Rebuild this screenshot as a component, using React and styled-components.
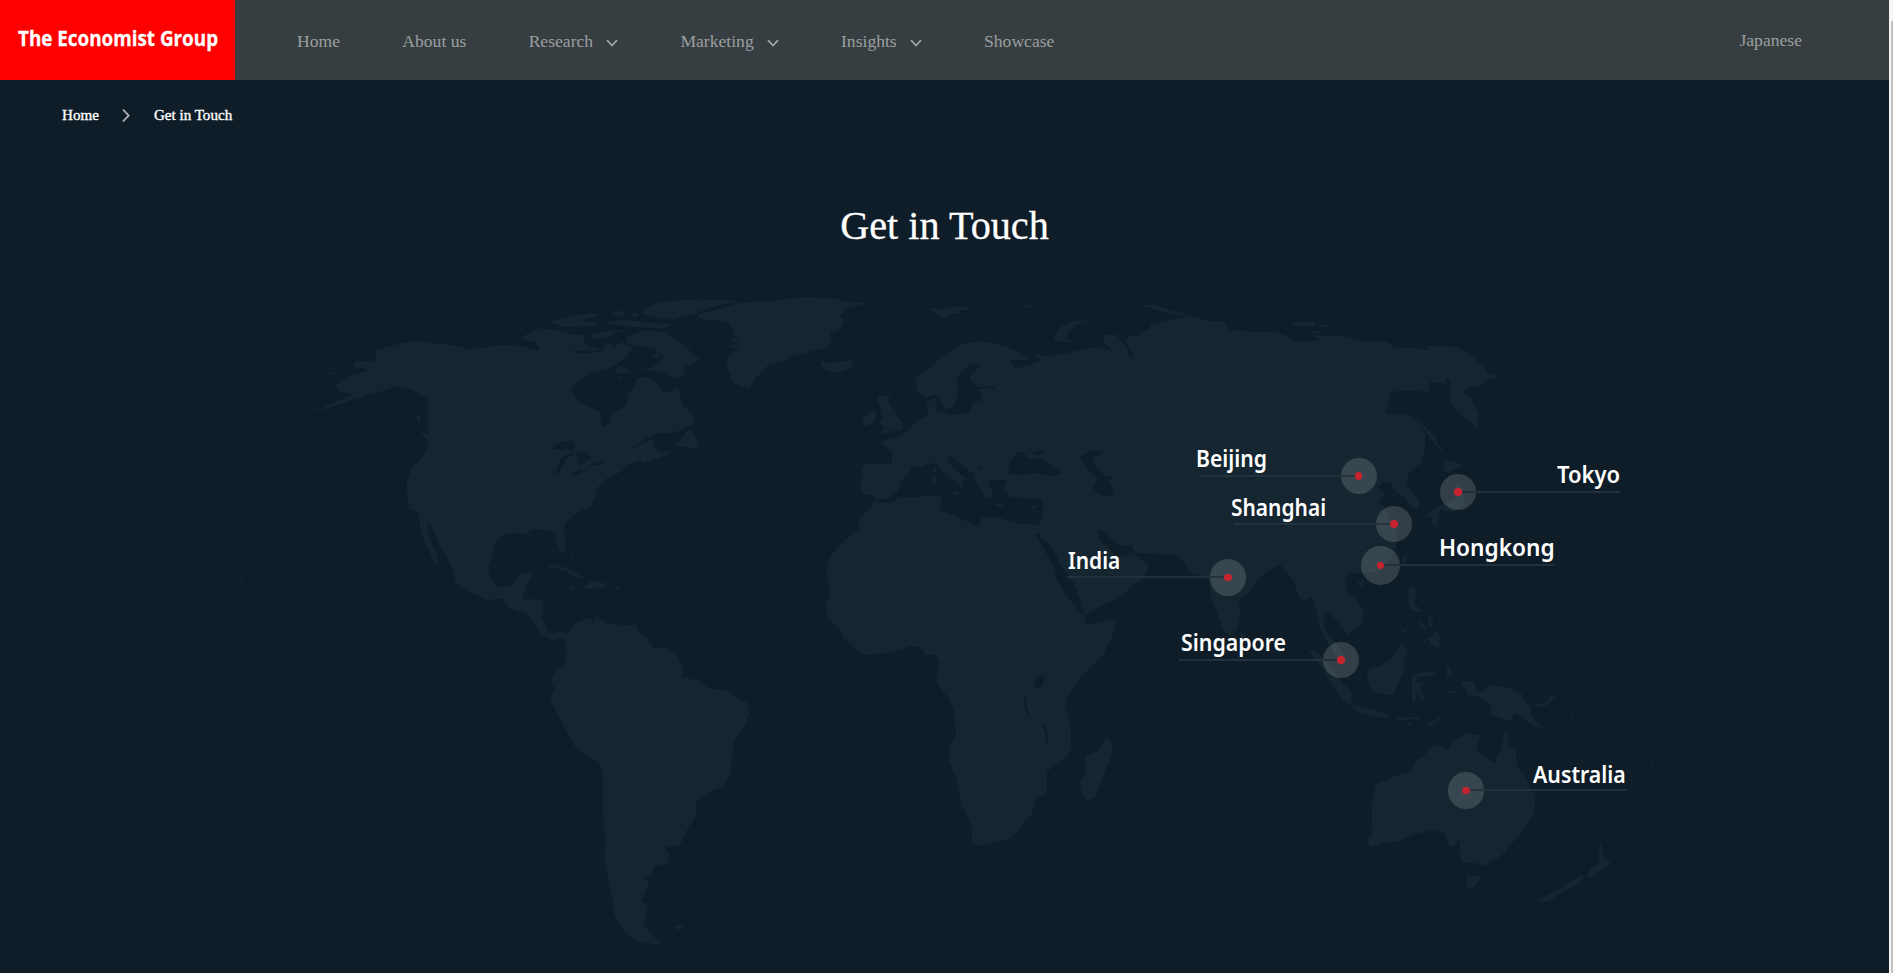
import React from "react";
import styled, { createGlobalStyle } from "styled-components";

const LAND = "#152631";
const OCEAN = "#0f1d29";

const GlobalStyle = createGlobalStyle`
  body {
    margin: 0;
    background: ${OCEAN};
    font-family: "Liberation Serif", "Times New Roman", serif;
    overflow: hidden;
  }
`;

const Window = styled.div`
  display: flex;
  width: 1893px;
  height: 973px;
  overflow: hidden;
`;

const Page = styled.div`
  flex: 1;
  min-width: 0;
  display: flex;
  flex-direction: column;
  background: ${OCEAN};
`;

const ScrollTrack = styled.div`
  width: 4px;
  box-sizing: border-box;
  padding: 21px 0 0 2px;
  background: #f6f6f6;
`;

const ScrollThumb = styled.div`
  height: 100%;
  background: #c1c1c1;
`;

const Header = styled.header`
  display: flex;
  flex: none;
  height: 80px;
  background: #373e41;
`;

const Logo = styled.a`
  flex: none;
  width: 235px;
  height: 80px;
  box-sizing: border-box;
  padding: 23px 0 0 17.5px;
  background: #fe0000;
  color: #fff;
  font: 700 21px/30px "Open Sans", sans-serif;
`;

const LogoText = styled.span`
  display: inline-block;
  white-space: nowrap;
  transform-origin: 0 50%;
  transform: scaleX(0.897);
  -webkit-text-stroke: 0.3px #fff;
`;

const Nav = styled.nav`
  flex: 1;
  display: flex;
  gap: 62.3px;
  padding: 31px 0 0 62px;
`;

const NavLink = styled.a`
  display: flex;
  gap: 13px;
  height: 20px;
  font-size: 17.6px;
  line-height: 20px;
  white-space: nowrap;
  color: #9b9fa0;
`;

const NavChevron = styled.svg`
  width: 12px;
  height: 8px;
  margin-top: 8px;
  fill: none;
  stroke: #a0a4a5;
  stroke-width: 1.7;
`;

const Language = styled.a`
  padding: 30px 87px 0 0;
  font-size: 17.6px;
  line-height: 20px;
  color: #9b9fa0;
`;

const Breadcrumb = styled.div`
  display: flex;
  flex: none;
  height: 18px;
  padding: 26px 0 0 62px;
  font-size: 15.1px;
  line-height: 18px;
  color: #fff;
  -webkit-text-stroke: 0.35px #fff;
`;

const CrumbArrow = styled.svg`
  width: 8px;
  height: 13px;
  margin: 3px 23.5px 0 23.5px;
  fill: none;
  stroke: #a7adb2;
  stroke-width: 1.8;
`;

const Title = styled.h1`
  margin: 79px 0 0;
  height: 46px;
  font-size: 40.2px;
  line-height: 46px;
  font-weight: 400;
  text-align: center;
  color: #fff;
  -webkit-text-stroke: 0.3px #fff;
`;

const MapCanvas = styled.div`
  position: relative;
  flex: none;
  width: 1889px;
  height: 693px;
  margin-top: 31px;
`;

const MapArt = styled.svg`
  display: block;
  width: 1889px;
  height: 693px;
  fill: ${LAND};
`;

const Pin = styled.div`
  position: absolute;
  left: ${(p) => p.$x - p.$r}px;
  top: ${(p) => p.$y - 280 - p.$r}px;
  width: ${(p) => p.$r * 2}px;
  height: ${(p) => p.$r * 2}px;
  border-radius: 50%;
  background: rgba(255, 255, 255, 0.15);
  display: grid;
  place-items: center;
`;

const PinDot = styled.i`
  position: relative;
  width: 7.6px;
  height: 7.6px;
  border-radius: 50%;
  background: #c7232f;
`;

const Leader = styled.div`
  position: absolute;
  left: ${(p) => p.$from}px;
  top: ${(p) => Math.floor(p.$y) - 281}px;
  width: ${(p) => p.$to - p.$from}px;
  height: 2px;
  background: ${(p) => (p.$inner ? "rgba(8, 16, 24, 0.35)" : "#21323e")};
`;

const City = styled.span`
  position: absolute;
  left: ${(p) => p.$x}px;
  top: ${(p) => p.$base - 280 - 24}px;
  font: 600 ${(p) => p.$size}px/32px "Noto Sans", sans-serif;
  color: #fff;
  white-space: nowrap;
  transform-origin: 0 0;
  transform: scaleX(${(p) => p.$stretch});
`;

const cities = [
  { name: "Beijing", x: 1196, base: 467, stretch: 0.94, cx: 1358.7, cy: 476, end: 1199 },
  { name: "Shanghai", x: 1230.5, base: 516, stretch: 0.93, cx: 1394, cy: 524, end: 1234 },
  { name: "India", x: 1067.5, base: 569, stretch: 0.93, cx: 1228, cy: 577.5, end: 1067 },
  { name: "Singapore", x: 1180.5, base: 651, stretch: 0.948, cx: 1341.3, cy: 660, end: 1179 },
  { name: "Tokyo", x: 1557, base: 483, stretch: 0.978, cx: 1458.3, cy: 492, end: 1620 },
  { name: "Hongkong", x: 1438.5, base: 555, stretch: 0.943, size: 24, r: 19.5, cx: 1380.5, cy: 565.4, end: 1554 },
  { name: "Australia", x: 1533, base: 783, stretch: 0.946, cx: 1466.3, cy: 790.5, end: 1627 },
];

const Down = () => (
  <NavChevron viewBox="0 0 12 8">
    <path d="M1 1.2 6 6.6 11 1.2" />
  </NavChevron>
);

const WorldMap = () => (
  <MapArt viewBox="0 280 1889 693">
    {/* North and Central America */}
    <g transform="translate(290 280) scale(.33333)">
      <path d="M258 212 330 190 400 182 430 190 490 196 540 208 600 200 650 194 700 200 750 212 800 220 840 216 880 222 930 215 945 195 960 190 985 215 1000 235 980 255 950 268 900 282 870 300 845 325 850 345 865 365 905 385 935 398 930 420 940 442 955 435 965 400 990 390 1010 375 1015 345 1030 320 1040 295 1070 290 1100 305 1115 330 1130 340 1150 330 1165 320 1170 350 1180 380 1210 400 1214 425 1200 440 1150 458 1100 460 1060 480 1020 508 1060 490 1095 475 1090 500 1110 518 1140 512 1130 525 1060 550 1055 540 1010 555 995 575 950 595 925 620 910 665 900 680 860 700 825 730 820 750 828 790 820 822 805 810 795 760 770 750 725 748 710 762 680 758 645 762 615 785 605 830 595 860 600 895 620 920 650 920 675 912 685 885 700 878 730 878 715 905 705 935 695 958 750 958 762 968 755 1010 770 1045 785 1062 810 1050 835 1068 825 1080 810 1070 790 1082 750 1060 720 1010 700 998 660 985 635 955 595 960 545 940 495 905 490 870 470 830 450 800 430 750 420 728 410 735 420 780 440 820 445 855 430 840 405 790 390 740 388 700 358 685 352 640 350 600 365 565 400 530 412 500 415 470 415 355 390 345 370 330 320 318 270 335 230 345 195 365 205 352 150 372 90 390 45 400 100 382 150 360 190 345 150 335 135 315 170 290 220 275 235 268 195 262 195 245 250 242 260 235Z" />
      <path d="M690 175 740 145 800 150 850 165 880 165 885 190 900 200 930 205 920 214 870 210 820 220 760 222 740 215 750 205 735 185ZM780 125 830 112 910 100 925 106 870 122 925 128 905 138 850 140 810 138ZM900 165 960 152 1000 150 940 175 910 178ZM940 130 990 120 1060 126 1140 132 1120 145 1020 140ZM960 95 1000 93 1005 105 985 108ZM1010 108 1040 98 1045 110ZM1010 170 1060 152 1130 155 1150 175 1195 200 1200 220 1232 240 1185 260 1180 285 1150 295 1110 275 1050 268 1090 262 1110 240 1125 228 1090 205 1050 200 1010 190ZM1055 90 1110 65 1220 58 1350 62 1290 75 1215 100 1150 120 1090 112 1060 102ZM970 278 990 255 1025 275 1000 282ZM945 215 1000 185 1030 205 1000 240ZM980 292 1000 290 990 300ZM1085 228 1105 218 1112 226 1098 234ZM378 408 395 405 385 430ZM392 455 425 462 438 490 425 498ZM1155 495 1190 455 1205 450 1225 490 1222 508 1180 500ZM757 870 790 852 830 865 885 895 860 893 830 875 790 862ZM880 925 905 900 950 912 945 922 910 928ZM835 920 858 922 845 929ZM970 920 995 923 980 929ZM842 820 852 835 846 838ZM115 278 140 276 130 285ZM100 322 120 320 115 328Z" />
      <path fill={OCEAN} d="M780 508 815 485 845 480 858 495 850 512 830 508 805 510ZM795 580 810 540 830 522 855 520 830 535 815 560 810 578ZM860 520 890 515 903 535 885 545 870 558 862 545ZM845 580 870 570 900 566 890 574 860 584ZM895 555 930 545 942 550 910 558Z" />
    </g>
    <path d="M238 579 243 580 243 583 239 581Z" />
    {/* South America */}
    <g transform="translate(520 600) scale(.33333)">
      <path d="M135 108 165 70 215 52 216 90 222 60 235 52 265 72 320 75 350 73 355 95 380 115 400 143 440 143 470 160 490 210 485 232 540 242 565 265 625 272 650 295 682 308 688 340 675 375 640 425 638 470 630 520 610 560 575 572 540 595 528 610 526 650 495 700 480 735 445 740 425 732 448 765 440 792 400 798 395 830 368 832 388 850 375 880 362 900 385 920 378 945 370 970 385 995 405 1015 432 1028 400 1034 350 1022 310 990 283 945 275 880 262 820 253 780 255 700 248 640 250 540 240 490 205 468 165 440 130 375 105 325 92 305 92 285 105 265 92 250 100 225 135 185 140 150 135 120ZM460 982 480 974 495 984 475 989Z" />
    </g>
    {/* Greenland, Iceland, Svalbard, British Isles */}
    <g transform="translate(680 280) scale(.33333)">
      <path d="M50 105 120 85 180 68 280 62 370 52 480 56 480 63 560 70 500 86 480 110 495 122 480 150 450 160 455 190 430 205 340 228 320 240 265 255 230 290 208 325 185 320 160 308 140 260 145 225 178 207 148 200 178 190 150 180 175 172 152 165 162 158 150 130 120 122 70 120ZM420 242 445 250 515 240 515 262 480 278 440 272 425 260ZM590 360 600 345 630 350 625 370 645 390 655 415 672 430 665 450 630 455 595 462 615 440 600 430 610 410 600 400 605 385ZM550 410 580 388 590 405 580 430 548 440ZM745 85 790 88 820 80 870 82 870 88 830 92 855 100 820 100 795 118 770 105Z" />
    </g>
    {/* Europe, western Asia and Arabia */}
    <g transform="translate(810 280) scale(.33333)">
      <path d="M318 290 350 270 400 225 450 195 510 183 550 190 600 205 655 228 660 240 595 240 615 264 655 258 690 242 675 222 710 228 760 222 830 205 870 205 912 216 880 185 882 165 920 165 950 205 962 240 972 225 945 180 960 168 985 168 985 158 1020 148 1020 140 1070 125 1130 110 1180 122 1240 125 1260 150 1260 900 1200 900 1165 885 1140 880 1105 825 1040 822 975 818 965 798 930 795 900 775 885 752 862 750 870 780 895 805 920 830 945 830 970 812 985 835 1018 855 1000 895 960 925 925 955 880 975 822 1006 810 960 790 905 760 870 740 830 710 785 690 770 688 755 690 735 695 715 700 680 695 655 670 658 640 655 600 650 580 625 590 600 575 598 540 600 535 610 550 640 545 655 525 650 510 620 495 600 492 582 460 560 425 528 410 530 415 545 440 575 475 600 460 600 457 628 445 612 410 590 380 555 360 548 340 560 305 560 300 575 270 605 262 635 235 655 200 658 190 648 155 640 150 610 160 585 152 565 165 552 245 553 248 520 215 490 225 480 265 468 300 445 320 420 355 408 350 370 375 350 380 375 375 395 410 400 430 405 480 398 490 365 510 362 520 350 500 328 555 325 550 318 500 320 480 300 480 285 510 255 485 250 450 280 440 300 445 330 440 360 425 385 405 390 395 370 375 345 345 350 320 335ZM412 635 450 632 445 648ZM363 590 380 590 378 615 365 615ZM367 565 378 562 378 582ZM550 672 585 672 570 680ZM655 680 685 674 672 686ZM730 180 745 145 780 125 850 118 800 135 775 155 770 175 785 188ZM630 78 665 76 650 84ZM990 75 1040 75 1080 92 1130 100 1120 106 1060 95Z" />
      <path fill={OCEAN} d="M595 580 600 545 620 515 645 520 650 535 690 535 740 565 755 580 720 590 680 578 640 585 605 585ZM665 520 705 508 690 527ZM810 530 850 510 875 515 870 528 845 530 860 560 890 590 905 585 905 595 895 600 912 640 895 652 860 640 850 620 865 600 830 565ZM502 565 514 562 514 572Z" />
    </g>
    {/* Africa and Madagascar */}
    <g transform="translate(810 560) scale(.33333)">
      <path d="M190 -175 240 -170 270 -188 330 -190 395 -195 390 -150 430 -135 505 -100 515 -130 560 -130 620 -110 690 -105 690 -80 675 -75 700 -35 730 15 740 60 775 115 820 165 830 195 920 175 915 210 880 285 810 355 775 405 765 440 782 500 782 570 770 590 710 635 710 700 675 720 665 765 600 835 560 845 500 858 487 845 485 800 455 735 440 660 415 600 420 560 438 525 430 445 412 410 380 370 388 300 375 285 345 285 330 262 305 258 240 278 160 285 100 235 90 210 55 175 45 130 58 110 60 80 50 40 52 10 75 -30 110 -65 145 -90 150 -130 185 -155ZM892 530 905 550 905 580 880 650 858 712 830 722 815 700 810 665 828 640 825 590 860 575Z" />
      <path fill={OCEAN} d="M675 355 700 343 705 360 690 385 675 385Z" />
      <path fill="none" stroke={OCEAN} strokeWidth="7" d="M643 410 648 445 660 475M697 487 709 515 710 555" />
    </g>
    {/* Siberia and the Russian Far East */}
    <g transform="translate(1140 280) scale(.33333)">
      <path d="M0 155 30 148 30 135 70 125 150 108 190 120 255 125 250 148 330 155 400 155 435 165 470 185 540 180 520 165 620 170 660 182 740 185 760 202 870 208 850 198 950 200 1000 230 1035 265 1035 278 1078 290 1040 300 1020 320 985 320 965 335 990 350 1015 400 1015 448 970 410 930 370 932 310 920 290 915 310 870 305 865 338 830 330 755 335 735 395 760 405 780 400 820 410 855 460 855 500 845 550 820 565 805 580 800 612 840 665 835 687 812 680 795 650 765 635 755 612 730 606 710 625 735 640 715 655 690 720 0 720ZM820 410 835 418 870 455 897 475 885 478 912 515 900 510 860 460ZM910 543 940 545 968 552 960 565 935 570 925 580 912 570ZM450 128 520 126 525 138 470 138ZM535 135 580 137 545 142ZM515 153 560 157 530 162ZM905 182 920 180 918 186Z" />
    </g>
    {/* India, China and South-East Asia */}
    <g transform="translate(1050 430) scale(.33333)">
      <path d="M300 250 320 372 385 375 420 425 445 435 475 445 485 510 500 545 520 600 540 618 560 600 570 560 568 510 600 485 625 450 650 425 690 405 715 430 735 460 745 500 765 510 785 500 800 545 812 600 840 650 870 700 885 700 880 670 855 635 830 610 820 580 825 545 850 560 875 590 895 615 940 575 942 545 920 510 890 480 885 445 905 430 935 430 985 425 1020 390 1040 350 1040 300 1020 270 1010 240 985 215 1005 195 975 180 965 160 950 100 700 0 300 0ZM572 605 585 615 580 630 572 628ZM922 455 945 450 940 468 928 468ZM1060 380 1072 373 1068 405 1058 400ZM775 660 800 665 850 720 880 760 905 790 905 825 880 815 840 760 820 720ZM905 825 935 830 1000 850 1025 862 980 862 920 845ZM950 740 960 715 990 710 1030 680 1055 640 1075 660 1060 690 1065 720 1040 770 1030 795 985 790 960 775ZM1085 735 1110 728 1155 725 1150 735 1105 740 1095 760 1130 752 1110 772 1127 810 1112 805 1102 785 1095 820 1085 815 1085 780Z" />
    </g>
    {/* Japan, the Philippines and New Guinea */}
    <g transform="translate(1340 430) scale(.33333)">
      <path d="M345 150 370 180 375 225 340 245 300 240 290 258 300 262 285 290 275 280 275 262 258 258 275 240 310 220 345 210 350 180ZM205 472 225 475 228 500 220 520 255 545 235 545 215 540 205 520ZM265 550 280 570 275 600 265 580ZM235 570 260 590 255 600 240 585ZM245 630 270 625 290 600 300 625 297 655 275 645 265 630 250 638ZM185 605 210 583 205 592 190 610ZM170 862 240 862 240 868 175 870ZM260 885 300 862 305 866 270 888ZM195 875 218 880 210 888ZM320 712 332 718 335 735 320 745ZM300 788 355 783 350 790ZM360 755 400 752 410 780 430 785 450 765 500 772 545 790 550 810 575 835 570 845 585 870 610 895 580 890 545 860 520 850 515 875 470 860 450 855 455 830 420 800 385 795 375 775ZM585 825 620 818 632 795 645 800 625 825 595 832ZM618 780 640 795 648 805 635 798Z" />
      <path fill="none" stroke={LAND} strokeWidth="5" strokeDasharray="12 10" d="M660 815 680 840 710 860 750 892" />
    </g>
    {/* Australia and New Zealand */}
    <g transform="translate(1340 700) scale(.3527 .33333)">
      <path d="M100 255 150 230 200 215 215 180 235 172 255 140 280 132 305 148 320 120 350 108 350 95 380 105 402 105 385 145 410 170 438 188 455 150 470 88 480 135 497 145 502 200 530 235 543 270 555 285 550 340 520 390 460 465 435 482 405 498 380 488 345 488 340 450 340 418 318 442 305 435 300 405 270 390 210 402 165 425 125 428 90 440 75 425 92 400 90 320ZM360 525 402 528 380 560 358 565ZM735 430 742 436 746 470 757 482 772 482 755 498 735 515 705 536 700 532 712 505 735 490ZM684 525 690 532 680 548 640 570 590 605 560 605 558 597 580 590 620 568ZM875 188 890 184 885 195ZM898 172 912 167 905 174ZM755 145 762 150 764 165 758 160Z" />
    </g>
  </MapArt>
);

const CityMarker = ({ city }) => {
  const { name, x, base, stretch, cx, cy, end, size = 22.5, r = 18.1 } = city;
  const onLeft = end < cx;
  const edge = onLeft ? cx - r : cx + r;
  return (
    <>
      <Leader $from={Math.min(end, edge)} $to={Math.max(end, edge)} $y={cy} />
      <Pin $x={cx} $y={cy} $r={r} />
      <Leader $inner $from={Math.min(cx, edge)} $to={Math.max(cx, edge)} $y={cy} />
      <Pin as={DotHolder} $x={cx} $y={cy} $r={r}>
        <PinDot />
      </Pin>
      <City $x={x} $base={base} $size={size} $stretch={stretch}>
        {name}
      </City>
    </>
  );
};

const DotHolder = styled.div`
  && {
    background: none;
  }
`;

export default function App() {
  return (
    <Window>
      <GlobalStyle />
      <Page>
        <Header>
          <Logo>
            <LogoText>The Economist Group</LogoText>
          </Logo>
          <Nav>
            <NavLink>Home</NavLink>
            <NavLink>About us</NavLink>
            <NavLink>Research<Down /></NavLink>
            <NavLink>Marketing<Down /></NavLink>
            <NavLink>Insights<Down /></NavLink>
            <NavLink>Showcase</NavLink>
          </Nav>
          <Language>Japanese</Language>
        </Header>
        <Breadcrumb>
          <span>Home</span>
          <CrumbArrow viewBox="0 0 8 13">
            <path d="M1 .6 6.8 6.5 1 12.4" />
          </CrumbArrow>
          <span>Get in Touch</span>
        </Breadcrumb>
        <Title>Get in Touch</Title>
        <MapCanvas>
          <WorldMap />
          {cities.map((city) => (
            <CityMarker key={city.name} city={city} />
          ))}
        </MapCanvas>
      </Page>
      <ScrollTrack>
        <ScrollThumb />
      </ScrollTrack>
    </Window>
  );
}
